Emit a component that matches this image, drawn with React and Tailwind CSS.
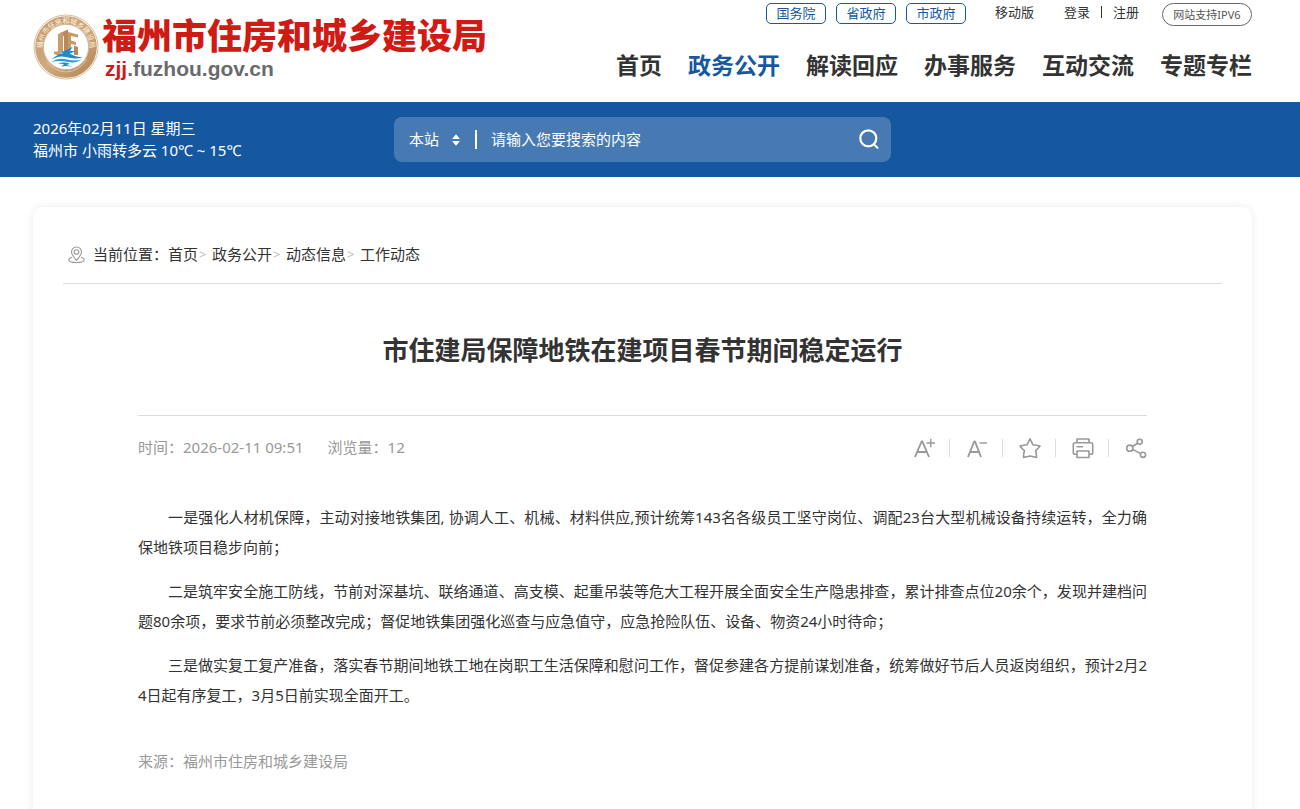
import React from "react";

const departments = ["国务院", "省政府", "市政府"];
const navItems = ["首页", "政务公开", "解读回应", "办事服务", "互动交流", "专题专栏"];
const crumbs = ["首页", "政务公开", "动态信息", "工作动态"];
const paragraphs = [
  "一是强化人材机保障，主动对接地铁集团, 协调人工、机械、材料供应,预计统筹143名各级员工坚守岗位、调配23台大型机械设备持续运转，全力确保地铁项目稳步向前；",
  "二是筑牢安全施工防线，节前对深基坑、联络通道、高支模、起重吊装等危大工程开展全面安全生产隐患排查，累计排查点位20余个，发现并建档问题80余项，要求节前必须整改完成；督促地铁集团强化巡查与应急值守，应急抢险队伍、设备、物资24小时待命；",
  "三是做实复工复产准备，落实春节期间地铁工地在岗职工生活保障和慰问工作，督促参建各方提前谋划准备，统筹做好节后人员返岗组织，预计2月24日起有序复工，3月5日前实现全面开工。",
];

function Emblem() {
  return (
    <svg viewBox="0 0 66 66" className="size-[66px] shrink-0" aria-hidden="true">
      <defs>
        <linearGradient id="ring" x1="0" y1="0" x2="1" y2="1">
          <stop offset="0" stopColor="#c39a6c" />
          <stop offset="0.5" stopColor="#cfaa7e" />
          <stop offset="1" stopColor="#b58857" />
        </linearGradient>
        <path id="ringText" d="M13.500 46.500 A23.700 23.700 0 1 1 52.500 46.500" />
      </defs>
      <circle cx="33" cy="33" r="32" fill="#fff" stroke="#d9bd98" strokeWidth="1" />
      <circle cx="33" cy="33" r="26.8" fill="none" stroke="url(#ring)" strokeWidth="8" />
      <circle cx="33" cy="33" r="22.6" fill="#fff" stroke="#b98f60" strokeWidth="0.6" />
      <text fill="#fff4e2" className="font-['Noto_Sans_CJK_SC',sans-serif] text-[7px]">
        <textPath href="#ringText" startOffset="50%" textAnchor="middle">福州市住房和城乡建设局</textPath>
      </text>
      <path d="M14 48 Q22 57.500 33 58 Q46 57.500 54 45" fill="none" stroke="#e6cda9" strokeWidth="0.8" />
      <path d="M27 19 L35 15.500 V39 H31 V22 L27 23.500 Z" fill="#b98a58" />
      <path d="M25 20 L30 18 V38 H27.500 V42 L21 40 V37.500 H25 Z" fill="#c79c6c" />
      <path d="M35 18 L45 20.500 V23.500 L38 22 V26.500 L43 28 V31 L38 30 V36 L35 38 Z" fill="#c69a68" />
      <path d="M41 31.500 L45 33 V41 H41 Z" fill="#b98a58" />
      <path d="M18 46 Q24 40 31 39 L27 38.500 Q34 36.500 40 32.500 L36.500 37 L43 37 L36.500 39.500 Q42 43 50 43.500 Q41 45.500 33 43 Q25 41 18 46 Z" fill="#1a8ad0" />
      <path d="M18 48 Q26 43 34 45.500 Q42 47.500 49 45.500 Q43 49.500 35 48 Q27 46 18 48 Z" fill="#2a9ada" />
      <path d="M25 49.500 Q32 47.500 37 50 L33 51 L40 52.500 L31 52 L28 53 L31 50 Z" fill="#1a8ad0" />
    </svg>
  );
}

function PinIcon() {
  return (
    <svg viewBox="0 0 18 18" className="mt-[2px] size-[18px] shrink-0" fill="none" stroke="#999" strokeWidth="1.100" aria-hidden="true">
      <path d="M8.500 14.300 C5.500 11 3.500 8.500 3.500 6 A5 5 0 0 1 13.500 6 C13.500 8.500 11.500 11 8.500 14.300 Z" />
      <circle cx="8.500" cy="6" r="2.300" />
      <path d="M4 11.200 C1.800 11.800 0.800 12.600 0.800 13.700 C0.800 15.500 4 16.500 8.500 16.500 C13 16.500 16.200 15.500 16.200 13.700 C16.200 12.600 15.200 11.800 13 11.200" />
    </svg>
  );
}

function ToolIcon({ children }) {
  return (
    <svg viewBox="0 0 24 24" className="size-6" fill="none" stroke="#999" strokeWidth="1.6" strokeLinejoin="round" aria-hidden="true">
      {children}
    </svg>
  );
}

const tools = [
  {
    label: "放大字体",
    icon: (
      <ToolIcon>
        <path d="M4 21 L10.600 5.500 H11.400 L18 21 M6.500 16 H15.500" strokeWidth="1.9" />
        <path d="M15.500 7 H24 M19.800 2.800 V11.200" strokeWidth="1.4" />
      </ToolIcon>
    ),
  },
  {
    label: "缩小字体",
    icon: (
      <ToolIcon>
        <path d="M4 21 L10.200 5.500 H11 L17 21 M6.500 16 H14.700" strokeWidth="1.9" />
        <path d="M15.500 7 H23" strokeWidth="1.4" />
      </ToolIcon>
    ),
  },
  {
    label: "收藏",
    icon: (
      <ToolIcon>
        <path d="M13 2.800 L16 8.800 Q19.500 9.100 23 10 Q21 12.600 18.700 14.700 Q19.700 18 19.500 21.400 Q16 21 13 20 Q10 21 6.500 21.400 Q6.400 18 7.400 14.700 Q5 12.600 3 10 Q6.500 9.100 10 8.800 Z" />
      </ToolIcon>
    ),
  },
  {
    label: "打印",
    icon: (
      <ToolIcon>
        <path d="M7 6.800 V3 H19 V6.800" />
        <path d="M7 18.300 H5 Q3.300 18.300 3.300 16.500 V8.600 Q3.300 6.800 5 6.800 H21 Q22.700 6.800 22.700 8.600 V16.500 Q22.700 18.300 21 18.300 H19" />
        <path d="M7 15 H19 V21.500 H7 Z M6.500 10.800 H13" />
      </ToolIcon>
    ),
  },
  {
    label: "分享",
    icon: (
      <ToolIcon>
        <circle cx="6.800" cy="12.200" r="3.100" />
        <circle cx="16.700" cy="5.800" r="2.500" />
        <circle cx="20" cy="18.800" r="2.600" />
        <path d="M9.400 10.500 L14.600 7.200 M9.700 13.400 L17.600 17.600" />
      </ToolIcon>
    ),
  },
];

function Header() {
  return (
    <header className="flex h-[102px] justify-between pl-[33px] pr-12">
      <a href="#" className="flex items-start pt-[14px]">
        <Emblem />
        <span className="flex flex-col pl-[3px]">
          <span className="text-[35px] leading-[44px] font-black whitespace-nowrap text-[#d01a14]">福州市住房和城乡建设局</span>
          <span className="pl-[3px] font-['Liberation_Sans',sans-serif] text-[21px] leading-[22px] font-bold text-[#6a6a6c]">
            <span className="text-[#d01a14]">zjj</span>.fuzhou.gov.cn
          </span>
        </span>
      </a>
      <div className="flex flex-col items-end">
        <div className="flex items-start pt-[3px] text-[13px] leading-[19px] text-[#333]">
          <div className="flex gap-[10px]">
            {departments.map((d) => (
              <a key={d} href="#" className="w-[60px] rounded-[5px] border border-[#15589f] text-center text-[#15589f]">{d}</a>
            ))}
          </div>
          <a href="#" className="ml-[29px]">移动版</a>
          <a href="#" className="ml-[30px]">登录</a>
          <span className="mx-[11px] mt-[3px] h-3 w-px bg-[#333]" />
          <a href="#">注册</a>
          <a href="#" className="ml-[23px] w-[90px] rounded-full border border-[#666] text-center text-[11px] leading-[21px] text-[#555]">网站支持IPV6</a>
        </div>
        <nav className="mt-[21px] flex gap-[26px] text-[23px] leading-[36px] font-bold whitespace-nowrap text-[#333]">
          {navItems.map((n) => (
            <a key={n} href="#" className={n === "政务公开" ? "text-[#15589f]" : ""}>{n}</a>
          ))}
        </nav>
      </div>
    </header>
  );
}

function SearchBand() {
  return (
    <section className="flex h-[75px] items-center bg-[#15589f] pl-[33px] text-[15px] text-white">
      <div className="w-[361px] shrink-0 pb-[2px] leading-[22px]">
        <p>2026年02月11日 星期三</p>
        <p>福州市 小雨转多云 10℃ ~ 15℃</p>
      </div>
      <form className="flex h-[45px] w-[497px] items-center rounded-lg bg-[#477ab2] pr-3 pl-[15px]" onSubmit={(e) => e.preventDefault()}>
        <div className="flex items-center gap-[11px]">
          <select aria-label="搜索范围" className="w-8 appearance-none bg-transparent outline-none">
            <option>本站</option>
          </select>
          <svg viewBox="0 0 8 12" className="h-3 w-2" fill="#fff" aria-hidden="true">
            <path d="M4 0.300 L7.900 5 H0.100 Z M4 11.700 L0.100 7 H7.900 Z" />
          </svg>
        </div>
        <span className="mr-[14px] ml-[15px] h-[19px] w-[2px] bg-white" />
        <input type="text" aria-label="搜索内容" placeholder="请输入您要搜索的内容" className="min-w-0 flex-1 bg-transparent outline-none placeholder:text-white" />
        <button type="submit" aria-label="搜索" className="pb-[2px]">
          <svg viewBox="0 0 20 20" className="size-5" fill="none" stroke="#fff" strokeWidth="2.2" strokeLinecap="round" aria-hidden="true">
            <circle cx="9.300" cy="9.300" r="8" />
            <path d="M15 15.500 L18.500 18.700" />
          </svg>
        </button>
      </form>
    </section>
  );
}

export default function App() {
  return (
    <div className="min-h-screen bg-white font-['Noto_Sans','Noto_Sans_CJK_SC',sans-serif]">
      <Header />
      <SearchBand />
      <main className="pt-[30px] pr-12 pl-[33px]">
        <article className="min-h-[640px] rounded-[10px] bg-white px-[30px] pt-[18px] shadow-[0_0_10px_rgba(0,0,0,0.08)]">
          <nav aria-label="当前位置" className="flex h-[59px] items-center border-b border-[#ddd] pl-[5px] text-[15px] text-[#333]">
            <PinIcon />
            <span className="pl-[7px]">当前位置：</span>
            {crumbs.map((c, i) => (
              <React.Fragment key={c}>
                {i > 0 && <span className="w-[14px] pt-[2px] pl-px text-[13px] text-[#bbb]">&gt;</span>}
                <a href="#">{c}</a>
              </React.Fragment>
            ))}
          </nav>
          <div className="px-[75px]">
            <h1 className="pt-[46px] pb-[45px] text-center text-[26px] leading-[40px] font-bold text-[#333]">市住建局保障地铁在建项目春节期间稳定运行</h1>
            <div className="flex h-16 items-center justify-between border-t border-[#ddd] text-[15px] text-[#999]">
              <p className="flex gap-6">
                <span>时间：2026-02-11 09:51</span>
                <span>浏览量：12</span>
              </p>
              <div className="flex items-center">
                {tools.map((t, i) => (
                  <React.Fragment key={t.label}>
                    {i > 0 && <span className="mx-[14px] h-[18px] w-px bg-[#ddd]" />}
                    <button type="button" aria-label={t.label}>{t.icon}</button>
                  </React.Fragment>
                ))}
              </div>
            </div>
            <div className="flex flex-col gap-[14px] pt-[23px] text-justify indent-[30px] text-[15px] leading-[30px] break-all text-[#333]">
              {paragraphs.map((p) => (
                <p key={p}>{p}</p>
              ))}
            </div>
            <p className="py-[36px] text-[15px] leading-[30px] text-[#999]">来源：福州市住房和城乡建设局</p>
          </div>
        </article>
      </main>
    </div>
  );
}
